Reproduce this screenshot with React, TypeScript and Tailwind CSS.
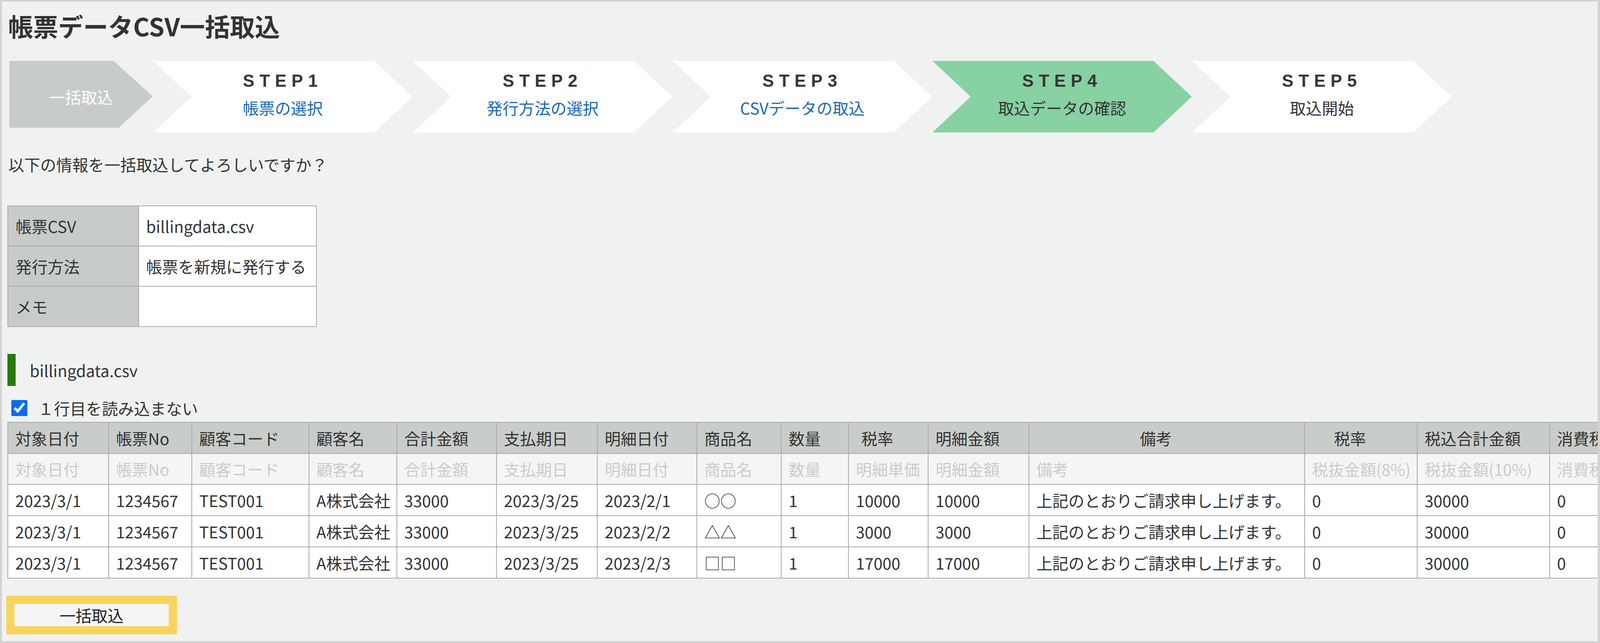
import { useState } from 'react';

type StepState = 'done' | 'current' | 'todo';

const steps: { no: number; label: string; state: StepState }[] = [
  { no: 1, label: '帳票の選択', state: 'done' },
  { no: 2, label: '発行方法の選択', state: 'done' },
  { no: 3, label: 'CSVデータの取込', state: 'done' },
  { no: 4, label: '取込データの確認', state: 'current' },
  { no: 5, label: '取込開始', state: 'todo' },
];

// column widths, header label, sub-header (csv column) label, header centered?
const columns: { w: string; head: string; sub: string; center?: boolean }[] = [
  { w: 'w-[258px]', head: '対象日付', sub: '対象日付' },
  { w: 'w-[213px]', head: '帳票No', sub: '帳票No' },
  { w: 'w-[300px]', head: '顧客コード', sub: '顧客コード' },
  { w: 'w-[225px]', head: '顧客名', sub: '顧客名' },
  { w: 'w-[255px]', head: '合計金額', sub: '合計金額' },
  { w: 'w-[258px]', head: '支払期日', sub: '支払期日' },
  { w: 'w-[255px]', head: '明細日付', sub: '明細日付' },
  { w: 'w-[216px]', head: '商品名', sub: '商品名' },
  { w: 'w-[172px]', head: '数量', sub: '数量' },
  { w: 'w-[204px]', head: '税率', sub: '明細単価', center: true },
  { w: 'w-[258px]', head: '明細金額', sub: '明細金額' },
  { w: 'w-[706px]', head: '備考', sub: '備考', center: true },
  { w: 'w-[288px]', head: '税率', sub: '税抜金額(8%)', center: true },
  { w: 'w-[339px]', head: '税込合計金額', sub: '税抜金額(10%)' },
  { w: 'w-[300px]', head: '消費税(8%)', sub: '消費税(8%)' },
  // next column is scrolled out of view, only its edge shows
  { w: 'w-[300px]', head: '', sub: '' },
];

const note = '上記のとおりご請求申し上げます。';

const rows: string[][] = [
  ['2023/3/1', '1234567', 'TEST001', 'A株式会社', '33000', '2023/3/25', '2023/2/1', '○○', '1', '10000', '10000', note, '0', '30000', '0', ''],
  ['2023/3/1', '1234567', 'TEST001', 'A株式会社', '33000', '2023/3/25', '2023/2/2', '△△', '1', '3000', '3000', note, '0', '30000', '0', ''],
  ['2023/3/1', '1234567', 'TEST001', 'A株式会社', '33000', '2023/3/25', '2023/2/3', '□□', '1', '17000', '17000', note, '0', '30000', '0', ''],
];

export default function App() {
  const [skipFirst, setSkipFirst] = useState(true);

  return (
    <div className="box-border h-screen w-screen overflow-hidden border-t-[4px] border-r-[6px] border-b-[5px] border-l-[5px] border-[#d3d3d3] bg-[#f0f2f1] pt-[16px] pl-[14px] text-[41px] leading-none text-[#333] [font-family:'Noto_Sans_CJK_JP','Noto_Sans',sans-serif]">
      <h1 className="flex h-[90px] items-center pl-[2px] text-[64px] font-bold">帳票データCSV一括取込</h1>

      <StepBar />

      <p className="mt-[51px] flex h-[60px] items-center pl-[2px]">以下の情報を一括取込してよろしいですか？</p>

      <table className="mt-[76px] border-collapse">
        <tbody>
          <InfoRow label="帳票CSV" value="billingdata.csv" />
          <InfoRow label="発行方法" value="帳票を新規に発行する" />
          <InfoRow label="メモ" value="" />
        </tbody>
      </table>

      <div className="mt-[69px] flex h-[82px] items-center">
        <div className="h-full w-[21px] bg-[#277a05]" />
        <span className="ml-[36px]">billingdata.csv</span>
      </div>

      <label className="mt-[36px] ml-[10px] flex h-[40px] items-center">
        <input
          type="checkbox"
          checked={skipFirst}
          onChange={(e) => setSkipFirst(e.target.checked)}
          className="m-0 h-[41px] w-[41px] accent-[#0b6cf0]"
        />
        <span className="ml-[27px]">１行目を読み込まない</span>
      </label>

      <div className="mt-[16px] overflow-hidden">
        <table className="w-[4547px] table-fixed border-collapse">
          <colgroup>
            {columns.map((c, i) => (
              <col key={i} className={c.w} />
            ))}
          </colgroup>
          <thead>
            <tr className="bg-[#c9cdca]">
              {columns.map((c, i) => (
                <th
                  key={i}
                  className={
                    'h-[80px] border-2 border-[#a9a9a9] font-normal whitespace-nowrap ' +
                    (c.center ? 'pr-[74px] pl-[18px] text-center' : 'px-[18px] text-left')
                  }
                >
                  {c.head}
                </th>
              ))}
            </tr>
            <tr className="bg-[#f5f5f5] text-[#cbcbcb]">
              {columns.map((c, i) => (
                <td key={i} className="h-[79px] border-2 border-[#a9a9a9] px-[18px] whitespace-nowrap">
                  {c.sub}
                </td>
              ))}
            </tr>
          </thead>
          <tbody>
            {rows.map((r, ri) => (
              <tr key={ri} className="bg-white">
                {r.map((v, ci) => (
                  <td key={ci} className="h-[80px] border-2 border-[#a9a9a9] px-[18px] whitespace-nowrap">
                    {v}
                  </td>
                ))}
              </tr>
            ))}
          </tbody>
        </table>
      </div>

      <div className="mt-[44px] ml-[-3px] inline-block bg-[#f8d45c] p-[21px]">
        <button
          type="button"
          className="flex h-[57px] w-[395px] items-center justify-center bg-[#f4f5f4] text-[41px] text-[#222]"
        >
          一括取込
        </button>
      </div>
    </div>
  );
}

function StepBar() {
  return (
    <div className="mt-[46px] flex h-[183px] gap-[1px] pl-[5px]">
      <div className="flex h-[183px] w-[367px] shrink-0 items-center justify-center bg-[#c8ccc9] text-white [clip-path:polygon(0_0,267px_0,367px_91px,280px_171px,0_171px)]">
        一括取込
      </div>
      {steps.map((s) => (
        <div
          key={s.no}
          className={
            'flex h-[183px] w-[664px] shrink-0 flex-col items-center pt-[29px] [clip-path:polygon(0_0,566px_0,100%_50%,566px_100%,0_100%,98px_50%)] ' +
            (s.state === 'current' ? 'bg-[#87d1a3]' : 'bg-white')
          }
        >
          <div className="flex h-[44px] items-center text-[44px] font-bold tracking-[13px] text-[#363636] [font-family:'Liberation_Sans',Arial,sans-serif]">
            STEP{s.no}
          </div>
          <div
            className={
              'mt-[22px] flex h-[48px] items-center ' +
              (s.state === 'done' ? 'text-[#1b68b3]' : 'text-[#333]')
            }
          >
            {s.label}
          </div>
        </div>
      ))}
    </div>
  );
}

function InfoRow({ label, value }: { label: string; value: string }) {
  return (
    <tr>
      <th className="h-[103px] w-[335px] border-2 border-[#a9a9a9] bg-[#c8ccc9] pl-[19px] text-left font-normal">
        {label}
      </th>
      <td className="h-[103px] w-[455px] border-2 border-[#a9a9a9] bg-white pl-[18px] whitespace-nowrap">{value}</td>
    </tr>
  );
}
